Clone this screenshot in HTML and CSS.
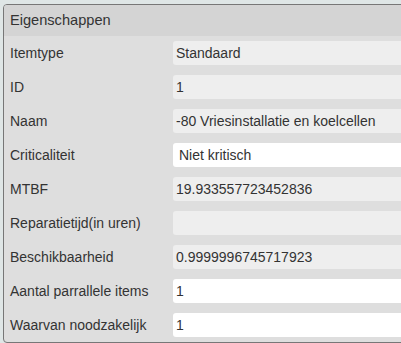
FILE: index.html
```
<!DOCTYPE html>
<html lang="nl">
<head>
    <meta charset="UTF-8">
    <meta name="viewport" content="width=device-width, initial-scale=1.0">
    <title>Eigenschappen</title>
    <link rel="stylesheet" href="styles.css">
</head>
<body>
    <div class="panel">
        <div class="panel-header">Eigenschappen</div>
        <div class="panel-body">
            <div class="prop-row">
                <label for="itemType">Itemtype</label>
                <input type="text" id="itemType" class="readonly" value="Standaard" readonly>
            </div>
            <div class="prop-row">
                <label for="itemId">ID</label>
                <input type="text" id="itemId" class="readonly" value="1" readonly>
            </div>
            <div class="prop-row">
                <label for="itemName">Naam</label>
                <input type="text" id="itemName" class="readonly" value="-80 Vriesinstallatie en koelcellen" readonly>
            </div>
            <div class="prop-row">
                <label for="criticality">Criticaliteit</label>
                <select id="criticality" class="select">
                    <option>Niet kritisch</option>
                    <option>Kritisch</option>
                </select>
            </div>
            <div class="prop-row">
                <label for="mtbf">MTBF</label>
                <input type="text" id="mtbf" class="readonly" value="19.933557723452836" readonly>
            </div>
            <div class="prop-row">
                <label for="repairTime">Reparatietijd(in uren)</label>
                <input type="text" id="repairTime" class="readonly" value="" readonly>
            </div>
            <div class="prop-row">
                <label for="availability">Beschikbaarheid</label>
                <input type="text" id="availability" class="readonly" value="0.9999996745717923" readonly>
            </div>
            <div class="prop-row">
                <label for="parallel">Aantal parrallele items</label>
                <input type="text" id="parallel" value="1">
            </div>
            <div class="prop-row">
                <label for="required">Waarvan noodzakelijk</label>
                <input type="text" id="required" value="1">
            </div>
        </div>
    </div>
</body>
</html>
```

FILE: styles.css
```
* {
    margin: 0;
    padding: 0;
    box-sizing: border-box;
}
body {
    font-family: "Liberation Sans", Arial, sans-serif;
    background: #dfe6e6;
    color: #333;
    overflow: hidden;
}
.panel {
    margin: 4px 0 0 3px;
    width: 440px;
    border: 1px solid #777;
    border-radius: 4px;
    background: #dedede;
    overflow: hidden;
}
.panel-header {
    height: 31px;
    line-height: 31px;
    padding-left: 6px;
    background: #d4d4d4;
    font-size: 14.6px;
}
.prop-row {
    display: grid;
    grid-template-columns: 163px 1fr;
    align-items: center;
    height: 34px;
    padding-left: 6px;
}
label {
    font-size: 14px;
}
input, .select {
    height: 24px;
    width: 100%;
    border: none;
    border-radius: 3px;
    background: #fff;
    color: #333;
    font-family: inherit;
    font-size: 14px;
    padding: 0 3px;
    outline: none;
}
input.readonly {
    background: #eeeeee;
}
.select {
    appearance: none;
    -webkit-appearance: none;
    padding: 0 6px;
}
```
